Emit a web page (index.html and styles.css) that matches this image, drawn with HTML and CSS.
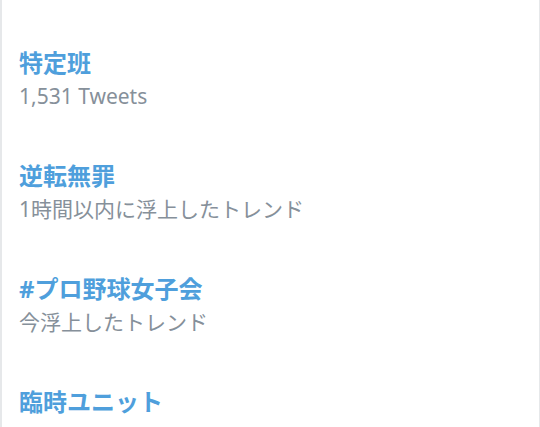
FILE: index.html
```html
<!DOCTYPE html>
<html lang="ja">
<head>
<meta charset="utf-8">
<link rel="stylesheet" href="styles.css">
</head>
<body>
<div class="panel">
  <div class="trend">
    <div class="title">特定班</div>
    <div class="meta">1,531 Tweets</div>
  </div>
  <div class="trend">
    <div class="title">逆転無罪</div>
    <div class="meta">1時間以内に浮上したトレンド</div>
  </div>
  <div class="trend">
    <div class="title">#プロ野球女子会</div>
    <div class="meta">今浮上したトレンド</div>
  </div>
  <div class="trend">
    <div class="title">臨時ユニット</div>
    <div class="meta">8,040 Tweets</div>
  </div>
</div>
</body>
</html>
```
FILE: styles.css
```css
html, body {
  margin: 0;
  padding: 0;
  background: #ffffff;
}
body {
  width: 540px;
  height: 427px;
  overflow: hidden;
}
.panel {
  box-sizing: border-box;
  height: 427px;
  border-left: 2px solid #e6e8ea;
  border-right: 1px solid #e6e8ea;
  padding: 46px 0 0 17px;
  font-family: "Noto Sans", "Noto Sans CJK JP", sans-serif;
}
.trend {
  height: 113px;
}
.title {
  font-size: 24px;
  font-weight: 700;
  line-height: 34px;
  color: #4f9fdc;
}
.meta {
  font-size: 21px;
  line-height: 32px;
  color: #86909a;
}
```
